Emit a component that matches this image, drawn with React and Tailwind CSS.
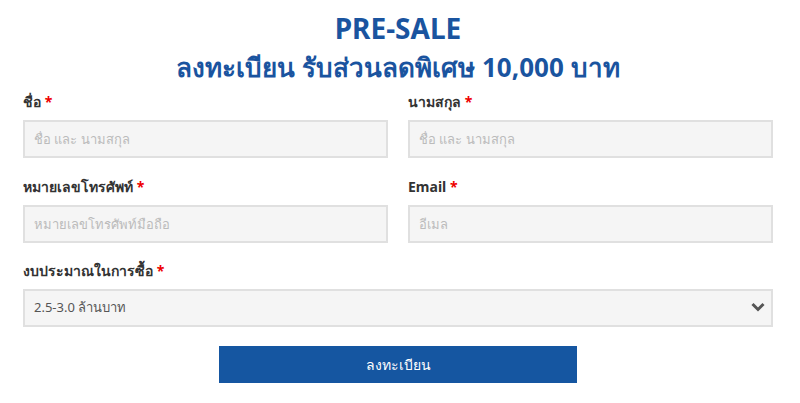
import { useState } from 'react';

const Field = ({ label, placeholder, type = 'text' }) => (
  <label className="block">
    <span className="mb-[9px] block text-[14px] font-bold leading-[18px] text-[#333]">
      {label} <span className="text-[#e00]">*</span>
    </span>
    <input
      type={type}
      placeholder={placeholder}
      className="h-[38px] w-full border-2 border-[#e0e0e0] bg-[#f5f5f5] px-[9px] text-[13px] text-[#555] outline-none placeholder:text-[#bbb]"
    />
  </label>
);

const App = () => {
  const [budget, setBudget] = useState('2.5-3.0');

  return (
    <div className="min-h-screen bg-white font-['Noto_Sans','Liberation_Sans',sans-serif]">
      <div className="ml-[23px] w-[750px] pt-[11px]">
        <h1 className="text-center text-[28px] font-bold leading-[34px] text-[#1a549f]">
          PRE-SALE
        </h1>
        <h2 className="mt-[5px] text-center text-[26px] font-bold leading-[34px] text-[#1a549f]">
          ลงทะเบียน รับส่วนลดพิเศษ 10,000 บาท
        </h2>

        <form className="mt-[9px]">
          <div className="grid grid-cols-2 gap-x-[20px] gap-y-[20px]">
            <Field label="ชื่อ" placeholder="ชื่อ และ นามสกุล" />
            <Field label="นามสกุล" placeholder="ชื่อ และ นามสกุล" />
            <Field label="หมายเลขโทรศัพท์" placeholder="หมายเลขโทรศัพท์มือถือ" />
            <Field label="Email" placeholder="อีเมล" type="email" />
          </div>

          <label className="mt-[19px] block">
            <span className="mb-[9px] block text-[14px] font-bold leading-[18px] text-[#333]">
              งบประมาณในการซื้อ <span className="text-[#e00]">*</span>
            </span>
            <div className="relative">
              <select
                value={budget}
                onChange={(event) => setBudget(event.target.value)}
                className="h-[38px] w-full appearance-none border-2 border-[#e0e0e0] bg-[#f5f5f5] px-[9px] text-[13px] text-[#555] outline-none"
              >
                <option value="2.5-3.0">2.5-3.0 ล้านบาท</option>
                <option value="3.0-3.5">3.0-3.5 ล้านบาท</option>
              </select>
              <svg
                className="pointer-events-none absolute right-[8px] top-[13px]"
                width="14"
                height="10"
                viewBox="0 0 14 10"
              >
                <path d="M1.5 2 L7 7.5 L12.5 2" fill="none" stroke="#555" strokeWidth="3" />
              </svg>
            </div>
          </label>

          <button
            type="submit"
            className="mx-auto mt-[19px] block h-[37px] w-[358px] bg-[#1556a1] text-[14px] font-normal text-white"
          >
            ลงทะเบียน
          </button>
        </form>
      </div>
    </div>
  );
};

export default App;
